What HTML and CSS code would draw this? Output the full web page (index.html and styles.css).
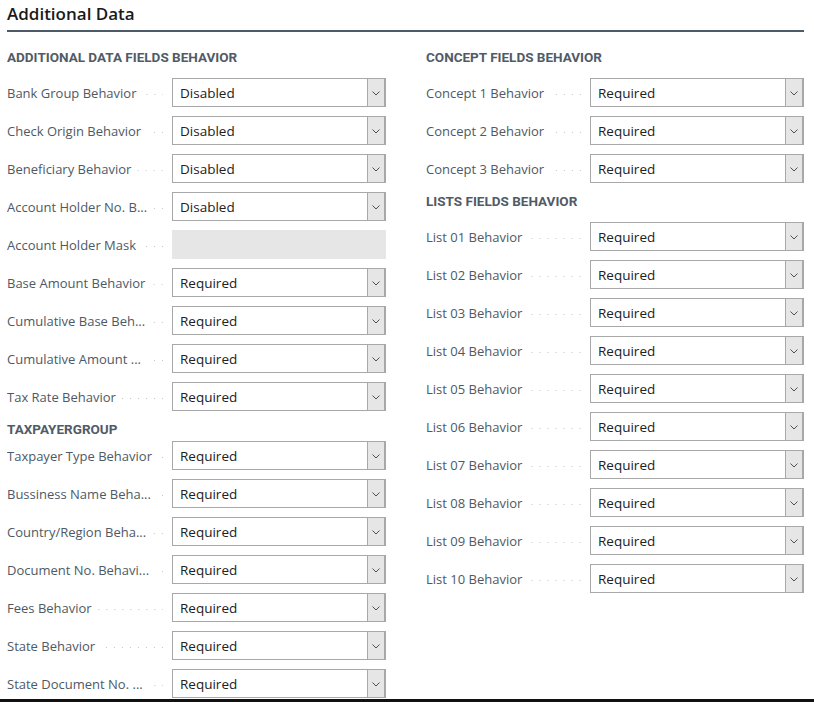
FILE: index.html
```html
<!DOCTYPE html>
<html lang="en">
<head>
<meta charset="utf-8">
<title>Additional Data</title>
<link rel="stylesheet" href="styles.css">
</head>
<body>
<div class="page">
  <h1 class="title">Additional Data</h1>
  <div class="columns">
    <div class="col">
      <div class="group-head">ADDITIONAL DATA FIELDS BEHAVIOR</div>
      <div class="row"><div class="label"><span class="text">Bank Group Behavior</span><span class="dots"></span></div><div class="select"><span class="value">Disabled</span><span class="btn"><svg viewBox="0 0 8 5" width="8" height="5"><path d="M0.5 0.5 L4 4 L7.5 0.5" fill="none" stroke="#505050" stroke-width="1"/></svg></span></div></div>
      <div class="row"><div class="label"><span class="text">Check Origin Behavior</span><span class="dots"></span></div><div class="select"><span class="value">Disabled</span><span class="btn"><svg viewBox="0 0 8 5" width="8" height="5"><path d="M0.5 0.5 L4 4 L7.5 0.5" fill="none" stroke="#505050" stroke-width="1"/></svg></span></div></div>
      <div class="row"><div class="label"><span class="text">Beneficiary Behavior</span><span class="dots"></span></div><div class="select"><span class="value">Disabled</span><span class="btn"><svg viewBox="0 0 8 5" width="8" height="5"><path d="M0.5 0.5 L4 4 L7.5 0.5" fill="none" stroke="#505050" stroke-width="1"/></svg></span></div></div>
      <div class="row"><div class="label"><span class="text">Account Holder No. B...</span><span class="dots"></span></div><div class="select"><span class="value">Disabled</span><span class="btn"><svg viewBox="0 0 8 5" width="8" height="5"><path d="M0.5 0.5 L4 4 L7.5 0.5" fill="none" stroke="#505050" stroke-width="1"/></svg></span></div></div>
      <div class="row"><div class="label"><span class="text">Account Holder Mask</span><span class="dots"></span></div><div class="field-disabled"></div></div>
      <div class="row"><div class="label"><span class="text">Base Amount Behavior</span><span class="dots"></span></div><div class="select"><span class="value">Required</span><span class="btn"><svg viewBox="0 0 8 5" width="8" height="5"><path d="M0.5 0.5 L4 4 L7.5 0.5" fill="none" stroke="#505050" stroke-width="1"/></svg></span></div></div>
      <div class="row"><div class="label"><span class="text">Cumulative Base Beh...</span><span class="dots"></span></div><div class="select"><span class="value">Required</span><span class="btn"><svg viewBox="0 0 8 5" width="8" height="5"><path d="M0.5 0.5 L4 4 L7.5 0.5" fill="none" stroke="#505050" stroke-width="1"/></svg></span></div></div>
      <div class="row"><div class="label"><span class="text">Cumulative Amount ...</span><span class="dots"></span></div><div class="select"><span class="value">Required</span><span class="btn"><svg viewBox="0 0 8 5" width="8" height="5"><path d="M0.5 0.5 L4 4 L7.5 0.5" fill="none" stroke="#505050" stroke-width="1"/></svg></span></div></div>
      <div class="row"><div class="label"><span class="text">Tax Rate Behavior</span><span class="dots"></span></div><div class="select"><span class="value">Required</span><span class="btn"><svg viewBox="0 0 8 5" width="8" height="5"><path d="M0.5 0.5 L4 4 L7.5 0.5" fill="none" stroke="#505050" stroke-width="1"/></svg></span></div></div>
      <div class="group-head sub">TAXPAYERGROUP</div>
      <div class="row"><div class="label"><span class="text">Taxpayer Type Behavior</span><span class="dots"></span></div><div class="select"><span class="value">Required</span><span class="btn"><svg viewBox="0 0 8 5" width="8" height="5"><path d="M0.5 0.5 L4 4 L7.5 0.5" fill="none" stroke="#505050" stroke-width="1"/></svg></span></div></div>
      <div class="row"><div class="label"><span class="text">Bussiness Name Beha...</span><span class="dots"></span></div><div class="select"><span class="value">Required</span><span class="btn"><svg viewBox="0 0 8 5" width="8" height="5"><path d="M0.5 0.5 L4 4 L7.5 0.5" fill="none" stroke="#505050" stroke-width="1"/></svg></span></div></div>
      <div class="row"><div class="label"><span class="text">Country/Region Beha...</span><span class="dots"></span></div><div class="select"><span class="value">Required</span><span class="btn"><svg viewBox="0 0 8 5" width="8" height="5"><path d="M0.5 0.5 L4 4 L7.5 0.5" fill="none" stroke="#505050" stroke-width="1"/></svg></span></div></div>
      <div class="row"><div class="label"><span class="text">Document No. Behavi...</span><span class="dots"></span></div><div class="select"><span class="value">Required</span><span class="btn"><svg viewBox="0 0 8 5" width="8" height="5"><path d="M0.5 0.5 L4 4 L7.5 0.5" fill="none" stroke="#505050" stroke-width="1"/></svg></span></div></div>
      <div class="row"><div class="label"><span class="text">Fees Behavior</span><span class="dots"></span></div><div class="select"><span class="value">Required</span><span class="btn"><svg viewBox="0 0 8 5" width="8" height="5"><path d="M0.5 0.5 L4 4 L7.5 0.5" fill="none" stroke="#505050" stroke-width="1"/></svg></span></div></div>
      <div class="row"><div class="label"><span class="text">State Behavior</span><span class="dots"></span></div><div class="select"><span class="value">Required</span><span class="btn"><svg viewBox="0 0 8 5" width="8" height="5"><path d="M0.5 0.5 L4 4 L7.5 0.5" fill="none" stroke="#505050" stroke-width="1"/></svg></span></div></div>
      <div class="row last"><div class="label"><span class="text">State Document No. ...</span><span class="dots"></span></div><div class="select"><span class="value">Required</span><span class="btn"><svg viewBox="0 0 8 5" width="8" height="5"><path d="M0.5 0.5 L4 4 L7.5 0.5" fill="none" stroke="#505050" stroke-width="1"/></svg></span></div></div>
    </div>
    <div class="col right">
      <div class="group-head">CONCEPT FIELDS BEHAVIOR</div>
      <div class="row"><div class="label"><span class="text">Concept 1 Behavior</span><span class="dots"></span></div><div class="select"><span class="value">Required</span><span class="btn"><svg viewBox="0 0 8 5" width="8" height="5"><path d="M0.5 0.5 L4 4 L7.5 0.5" fill="none" stroke="#505050" stroke-width="1"/></svg></span></div></div>
      <div class="row"><div class="label"><span class="text">Concept 2 Behavior</span><span class="dots"></span></div><div class="select"><span class="value">Required</span><span class="btn"><svg viewBox="0 0 8 5" width="8" height="5"><path d="M0.5 0.5 L4 4 L7.5 0.5" fill="none" stroke="#505050" stroke-width="1"/></svg></span></div></div>
      <div class="row"><div class="label"><span class="text">Concept 3 Behavior</span><span class="dots"></span></div><div class="select"><span class="value">Required</span><span class="btn"><svg viewBox="0 0 8 5" width="8" height="5"><path d="M0.5 0.5 L4 4 L7.5 0.5" fill="none" stroke="#505050" stroke-width="1"/></svg></span></div></div>
      <div class="group-head mid">LISTS FIELDS BEHAVIOR</div>
      <div class="row"><div class="label"><span class="text">List 01 Behavior</span><span class="dots"></span></div><div class="select"><span class="value">Required</span><span class="btn"><svg viewBox="0 0 8 5" width="8" height="5"><path d="M0.5 0.5 L4 4 L7.5 0.5" fill="none" stroke="#505050" stroke-width="1"/></svg></span></div></div>
      <div class="row"><div class="label"><span class="text">List 02 Behavior</span><span class="dots"></span></div><div class="select"><span class="value">Required</span><span class="btn"><svg viewBox="0 0 8 5" width="8" height="5"><path d="M0.5 0.5 L4 4 L7.5 0.5" fill="none" stroke="#505050" stroke-width="1"/></svg></span></div></div>
      <div class="row"><div class="label"><span class="text">List 03 Behavior</span><span class="dots"></span></div><div class="select"><span class="value">Required</span><span class="btn"><svg viewBox="0 0 8 5" width="8" height="5"><path d="M0.5 0.5 L4 4 L7.5 0.5" fill="none" stroke="#505050" stroke-width="1"/></svg></span></div></div>
      <div class="row"><div class="label"><span class="text">List 04 Behavior</span><span class="dots"></span></div><div class="select"><span class="value">Required</span><span class="btn"><svg viewBox="0 0 8 5" width="8" height="5"><path d="M0.5 0.5 L4 4 L7.5 0.5" fill="none" stroke="#505050" stroke-width="1"/></svg></span></div></div>
      <div class="row"><div class="label"><span class="text">List 05 Behavior</span><span class="dots"></span></div><div class="select"><span class="value">Required</span><span class="btn"><svg viewBox="0 0 8 5" width="8" height="5"><path d="M0.5 0.5 L4 4 L7.5 0.5" fill="none" stroke="#505050" stroke-width="1"/></svg></span></div></div>
      <div class="row"><div class="label"><span class="text">List 06 Behavior</span><span class="dots"></span></div><div class="select"><span class="value">Required</span><span class="btn"><svg viewBox="0 0 8 5" width="8" height="5"><path d="M0.5 0.5 L4 4 L7.5 0.5" fill="none" stroke="#505050" stroke-width="1"/></svg></span></div></div>
      <div class="row"><div class="label"><span class="text">List 07 Behavior</span><span class="dots"></span></div><div class="select"><span class="value">Required</span><span class="btn"><svg viewBox="0 0 8 5" width="8" height="5"><path d="M0.5 0.5 L4 4 L7.5 0.5" fill="none" stroke="#505050" stroke-width="1"/></svg></span></div></div>
      <div class="row"><div class="label"><span class="text">List 08 Behavior</span><span class="dots"></span></div><div class="select"><span class="value">Required</span><span class="btn"><svg viewBox="0 0 8 5" width="8" height="5"><path d="M0.5 0.5 L4 4 L7.5 0.5" fill="none" stroke="#505050" stroke-width="1"/></svg></span></div></div>
      <div class="row"><div class="label"><span class="text">List 09 Behavior</span><span class="dots"></span></div><div class="select"><span class="value">Required</span><span class="btn"><svg viewBox="0 0 8 5" width="8" height="5"><path d="M0.5 0.5 L4 4 L7.5 0.5" fill="none" stroke="#505050" stroke-width="1"/></svg></span></div></div>
      <div class="row"><div class="label"><span class="text">List 10 Behavior</span><span class="dots"></span></div><div class="select"><span class="value">Required</span><span class="btn"><svg viewBox="0 0 8 5" width="8" height="5"><path d="M0.5 0.5 L4 4 L7.5 0.5" fill="none" stroke="#505050" stroke-width="1"/></svg></span></div></div>
    </div>
  </div>
</div>
<div class="bottom-bar"></div>
</body>
</html>
```
FILE: styles.css
```css
html, body {
  margin: 0;
  padding: 0;
  background: #ffffff;
}
body {
  font-family: "Open Sans", "Noto Sans", sans-serif;
  overflow: hidden;
  height: 702px;
  display: flex;
  flex-direction: column;
}
.page {
  padding: 0 10px 0 7px;
  flex: 1;
  min-height: 0;
  overflow: hidden;
}
.title {
  margin: 0;
  font-size: 17px;
  font-weight: 600;
  line-height: 24px;
  padding-top: 2px;
  color: #1a1a1a;
  border-bottom: 2px solid #4d5a68;
  box-sizing: border-box;
  height: 32px;
}
.columns {
  display: grid;
  grid-template-columns: 379px 378px;
  column-gap: 40px;
}
.col {
  display: flex;
  flex-direction: column;
}
.group-head {
  font-family: "Roboto", "Open Sans", sans-serif;
  font-weight: 700;
  font-size: 13.5px;
  color: #505b67;
  line-height: 20px;
  margin-top: 15px;
  margin-bottom: 11px;
}
.group-head.mid {
  margin-top: -1px;
  margin-bottom: 11px;
}
.group-head.sub {
  margin-top: -1px;
  margin-bottom: 2px;
}
.row {
  display: flex;
  align-items: center;
  height: 29px;
  margin-bottom: 9px;
}
.row.last {
  margin-bottom: 0;
}
.label {
  width: 156px;
  margin-right: 9px;
  display: flex;
  align-items: center;
  font-size: 13px;
  color: #4e5965;
  white-space: nowrap;
  overflow: hidden;
}
.right .label {
  width: 155px;
}
.label .text {
  flex: none;
}
.dots {
  flex: 1;
  height: 1px;
  margin-left: 6px;
  margin-top: 3px;
  background-image: linear-gradient(to right, transparent 7px, #c3c3c3 7px);
  background-size: 8px 1px;
  background-repeat: repeat-x;
  background-position: right center;
}
.select {
  width: 214px;
  height: 29px;
  box-sizing: border-box;
  border: 1px solid #a8a8a8;
  border-right-width: 2px;
  display: flex;
  align-items: stretch;
  background: #ffffff;
}
.value {
  flex: 1;
  padding-left: 7px;
  font-size: 13.5px;
  color: #212121;
  line-height: 28px;
}
.btn {
  width: 16px;
  background: #e6e6e6;
  border-left: 1px solid #a8a8a8;
  display: flex;
  align-items: center;
  justify-content: center;
}
.btn svg {
  display: block;
  margin-top: 1px;
}
.field-disabled {
  width: 214px;
  height: 29px;
  background: #e6e6e6;
}
.bottom-bar {
  height: 3px;
  background: #111111;
  flex: none;
}
```
